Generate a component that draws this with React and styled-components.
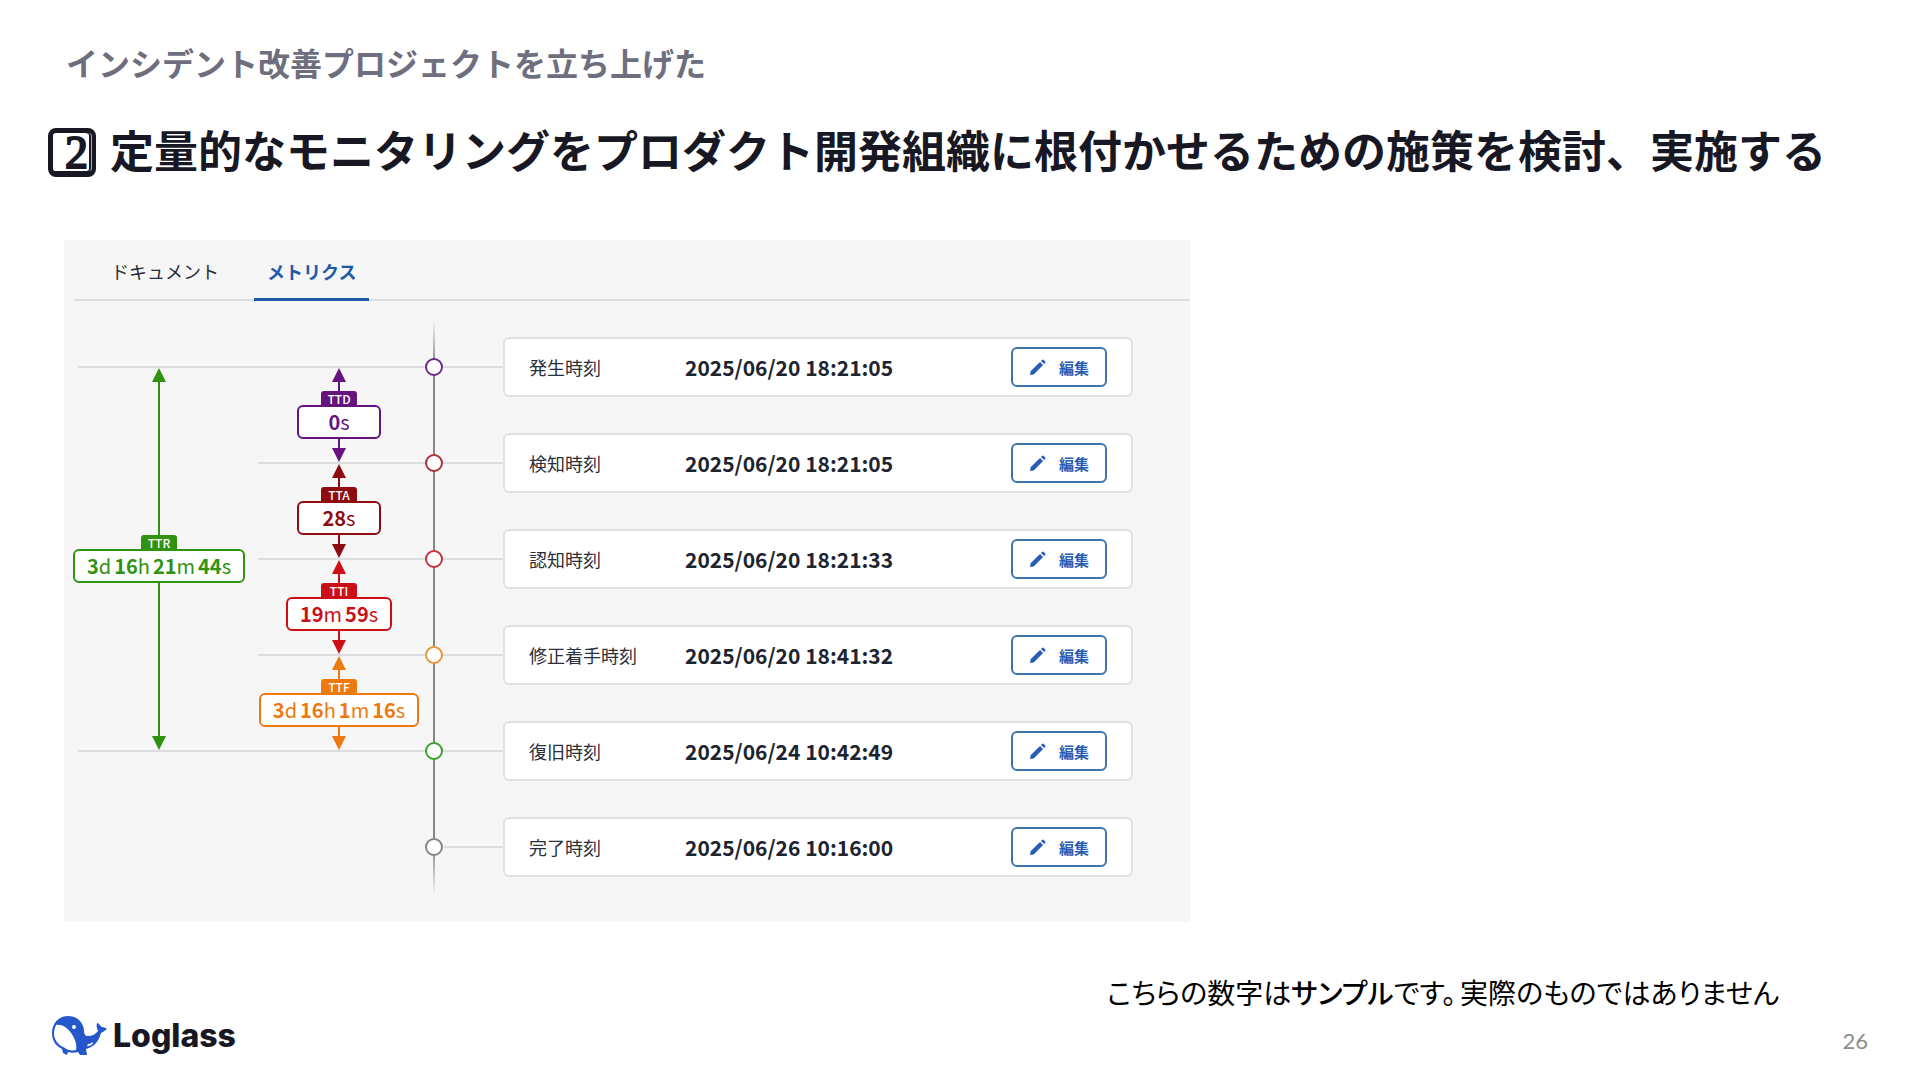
import React from "react";
import styled, { createGlobalStyle } from "styled-components";

const GlobalStyle = createGlobalStyle`
  * {
    box-sizing: border-box;
  }
  body {
    margin: 0;
    background: #ffffff;
    font-family: "Noto Sans CJK JP", sans-serif;
  }
`;

const events = [
  { label: "発生時刻", time: "2025/06/20 18:21:05", color: "#6b2a86", from: 1 },
  { label: "検知時刻", time: "2025/06/20 18:21:05", color: "#a8323a", from: 2 },
  { label: "認知時刻", time: "2025/06/20 18:21:33", color: "#c4343c", from: 2 },
  { label: "修正着手時刻", time: "2025/06/20 18:41:32", color: "#e8963c", from: 2 },
  { label: "復旧時刻", time: "2025/06/24 10:42:49", color: "#3f9f2c", from: 1 },
  { label: "完了時刻", time: "2025/06/26 10:16:00", color: "#858585", from: 4 },
];

// start and end are indexes into events
const durations = [
  { name: "TTR", parts: ["3d", "16h", "21m", "44s"], color: "#2f9310", column: 1, start: 0, end: 4 },
  { name: "TTD", parts: ["0s"], color: "#65147f", column: 2, start: 0, end: 1 },
  { name: "TTA", parts: ["28s"], color: "#8e0b10", column: 2, start: 1, end: 2 },
  { name: "TTI", parts: ["19m", "59s"], color: "#cc0f16", column: 2, start: 2, end: 3 },
  { name: "TTF", parts: ["3d", "16h", "1m", "16s"], color: "#ee790f", column: 2, start: 3, end: 4 },
];

const guideInset = { 1: "14px", 2: "4px", 4: "0" };

const PencilIcon = () => (
  <svg width="18" height="18" viewBox="0 0 18 18" fill="currentColor" aria-hidden="true">
    <path d="M1 17l.6-3.700L11 3.900l3.100 3.100-9.400 9.400zM12 2.900l1-1a1.200 1.200 0 0 1 1.700 0l1.400 1.400a1.200 1.200 0 0 1 0 1.700l-1 1z" />
  </svg>
);

const WhaleIcon = () => (
  <svg width="56" height="40" viewBox="0 0 56 40" aria-hidden="true">
    <path
      fill="#2456cc"
      d="M16 0C25 0 31 6 32 14c0 4 1 6 4 6 4 0 8-2 10-5-1-2-2-5-1-8 2 0 3 3 5 4 2 0 4 1 5 2-2 1-3 3-6 4-2 7-5 12-12 15l-3 1 1 6h-7l-2-3c-3 1-7 1-10 0l-1 3-4-2-1-4C4 30 0 25 0 17 0 7 7 0 16 0z"
    />
    <path fill="#ffffff" d="M4 9c7-1 13 4 17 11 3 5 4 10 3 14-4 1-9 0-11-2C6 29 2 24 2 17c0-3 1-5 2-8z" />
    <circle cx="22" cy="11" r="2" fill="#ffffff" />
    <path fill="#ffffff" d="M35 30l1-2c2 0 3-1 5-2 0 3-3 4-6 4z" />
  </svg>
);

const Duration = ({ item }) => (
  <Span column={item.column} start={item.start} end={item.end} color={item.color}>
    <ArrowHead />
    <Stem />
    <Badge>{item.name}</Badge>
    <Value>
      {item.parts.map((part) => (
        <span key={part}>
          <b>{part.slice(0, -1)}</b>
          {part.slice(-1)}
        </span>
      ))}
    </Value>
    <Stem />
    <ArrowHead down />
  </Span>
);

const App = () => {
  return (
    <Page>
      <GlobalStyle />
      <Subtitle>インシデント改善プロジェクトを立ち上げた</Subtitle>
      <Title>
        <Keycap>2</Keycap>
        定量的なモニタリングをプロダクト開発組織に根付かせるための施策を検討、実施する
      </Title>
      <Panel>
        <Tabs role="tablist">
          <Tab role="tab" aria-selected="false">ドキュメント</Tab>
          <Tab role="tab" aria-selected="true" active>メトリクス</Tab>
        </Tabs>
        <Timeline>
          {events.map((event, i) => (
            <Guide key={event.label} row={i} from={event.from} />
          ))}
          <Axis />
          {events.map((event, i) => (
            <Dot key={event.label} row={i} color={event.color} />
          ))}
          {durations.map((item) => (
            <Duration key={item.name} item={item} />
          ))}
          {events.map((event, i) => (
            <Card key={event.label} row={i}>
              <Label>{event.label}</Label>
              <Time>{event.time}</Time>
              <EditButton>
                <PencilIcon />
                編集
              </EditButton>
            </Card>
          ))}
        </Timeline>
      </Panel>
      <Note>
        <span>
          こちらの数字は<em>サンプル</em>です。
        </span>
        <span>実際のものではありません</span>
      </Note>
      <Footer>
        <Logo>
          <WhaleIcon />
          Loglass
        </Logo>
        <PageNumber>26</PageNumber>
      </Footer>
    </Page>
  );
};

export default App;

const Page = styled.main`
  display: flex;
  flex-direction: column;
  min-height: 100vh;
  padding: 38px 52px 20px 48px;
  color: #181824;
`;

const Subtitle = styled.p`
  margin: 0 0 0 18px;
  font-size: 32px;
  line-height: 48px;
  font-weight: 700;
  color: #6e6e7e;
`;

const Title = styled.h1`
  display: flex;
  align-items: flex-start;
  gap: 14px;
  margin: 31px 0 59px;
  font-size: 44px;
  line-height: 64px;
  font-weight: 700;
`;

const Keycap = styled.span`
  flex: none;
  width: 48px;
  height: 49px;
  margin-top: 11px;
  padding-left: 8px;
  border: solid #181824;
  border-width: 5px 4px 6px 5px;
  border-radius: 8px;
  box-shadow: inset -1px 0 0 #a8a8b0, inset -3px 0 0 #181824;
  font-family: "Liberation Serif", serif;
  font-size: 46px;
  line-height: 40px;
  font-weight: 400;
  text-align: center;
  -webkit-text-stroke: 2px #181824;
`;

const Panel = styled.section`
  max-width: 1126px;
  margin-left: 16px;
  padding-bottom: 27px;
  background: #f6f6f6;
`;

const Tabs = styled.div`
  display: flex;
  gap: 22px;
  height: 61px;
  margin-left: 10px;
  padding-left: 24px;
  border-bottom: 2px solid #dcdcdc;
`;

const Tab = styled.button`
  height: 61px;
  padding: 3px 13px 0;
  border: 0;
  border-bottom: 3px solid ${({ active }) => (active ? "#1f5aa6" : "transparent")};
  background: none;
  font-family: inherit;
  font-size: 18px;
  font-weight: ${({ active }) => (active ? 700 : 400)};
  color: ${({ active }) => (active ? "#1f5aa6" : "#2a2f3a")};
`;

const Timeline = styled.div`
  display: grid;
  grid-template-columns: 190px 170px 20px 59px 1fr;
  grid-template-rows: repeat(12, 48px);
  padding: 18px 57px 0 0;
`;

const Guide = styled.div`
  grid-column: ${({ from }) => from} / 5;
  grid-row: ${({ row }) => row * 2 + 1} / span 2;
  align-self: center;
  height: 2px;
  margin-left: ${({ from }) => guideInset[from]};
  background: #dddddd;
`;

const Axis = styled.div`
  grid-column: 3;
  grid-row: 1 / -1;
  justify-self: center;
  width: 2px;
  background: linear-gradient(transparent, #858585 48px, #858585 528px, transparent);
`;

const Dot = styled.div`
  grid-column: 3;
  grid-row: ${({ row }) => row * 2 + 1} / span 2;
  place-self: center;
  width: 18px;
  height: 18px;
  border: 2px solid ${({ color }) => color};
  border-radius: 50%;
  background: #ffffff;
`;

const Span = styled.div`
  grid-column: ${({ column }) => column};
  grid-row: ${({ start }) => start * 2 + 2} / ${({ end }) => end * 2 + 2};
  display: flex;
  flex-direction: column;
  align-items: center;
  padding: 1px 0;
  color: ${({ color }) => color};
`;

const ArrowHead = styled.div`
  width: 14px;
  height: 14px;
  background: currentColor;
  clip-path: ${({ down }) =>
    down ? "polygon(0 0, 100% 0, 50% 100%)" : "polygon(50% 0, 100% 100%, 0 100%)"};
`;

const Stem = styled.div`
  flex: 1;
  width: 2px;
  background: currentColor;
`;

const Badge = styled.div`
  width: 36px;
  height: 14px;
  border-radius: 3px 3px 0 0;
  background: currentColor;
  font-size: 12px;
  line-height: 15px;
  font-weight: 500;
  text-align: center;
  -webkit-text-fill-color: #ffffff;
`;

const Value = styled.div`
  display: flex;
  justify-content: center;
  gap: 3px;
  min-width: 84px;
  height: 34px;
  padding: 0 12px;
  border: 2px solid currentColor;
  border-radius: 6px;
  background: #ffffff;
  font-size: 20px;
  line-height: 30px;
  white-space: nowrap;
`;

const Card = styled.div`
  grid-column: 5;
  grid-row: ${({ row }) => row * 2 + 1} / span 2;
  align-self: center;
  display: flex;
  align-items: center;
  height: 60px;
  padding: 0 24px;
  border: 2px solid #e0e0e0;
  border-radius: 6px;
  background: #ffffff;
`;

const Label = styled.span`
  width: 156px;
  font-size: 18px;
  color: #2a2f3a;
`;

const Time = styled.time`
  font-size: 21px;
  font-weight: 700;
  color: #1c2430;
`;

const EditButton = styled.button`
  display: flex;
  align-items: center;
  justify-content: center;
  gap: 12px;
  width: 96px;
  height: 40px;
  margin-left: auto;
  border: 2px solid #3f73b0;
  border-radius: 6px;
  background: #ffffff;
  font-family: inherit;
  font-size: 15px;
  font-weight: 700;
  color: #2a5db4;
`;

const Note = styled.p`
  display: flex;
  justify-content: flex-end;
  gap: 4px;
  margin: 48px 89px 0 0;
  font-size: 28px;
  line-height: 44px;
  font-feature-settings: "palt";
  color: #000000;

  em {
    font-style: normal;
    font-weight: 500;
  }
`;

const Footer = styled.footer`
  display: flex;
  align-items: flex-end;
  justify-content: space-between;
  padding-left: 4px;
`;

const Logo = styled.div`
  display: flex;
  align-items: center;
  gap: 5px;
  padding-top: 2px;
  font-family: Inter, sans-serif;
  font-size: 32px;
  line-height: 40px;
  font-weight: 800;
`;

const PageNumber = styled.span`
  font-family: Lato, sans-serif;
  font-size: 22px;
  line-height: 30px;
  color: #8c8c8c;
`;
